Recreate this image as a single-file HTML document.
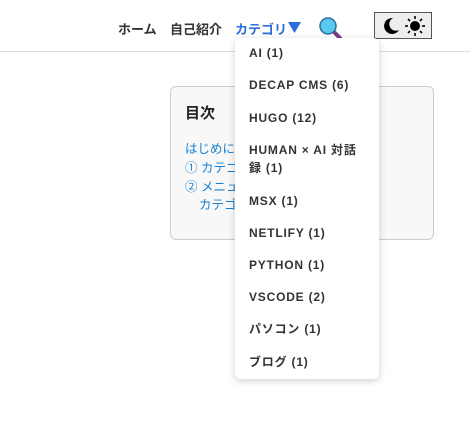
<!DOCTYPE html>
<html><head><meta charset="utf-8"><style>
body{margin:0;width:470px;height:424px;background:#fff;font-family:"Liberation Sans","Noto Sans CJK JP",sans-serif;position:relative;overflow:hidden}
.hdr{position:absolute;left:0;top:0;width:470px;height:51px;border-bottom:1px solid #ddd}
.nav{position:absolute;top:19px;font-size:13px;font-weight:bold;color:#333}
.toc{position:absolute;left:170px;top:86px;width:262px;height:152px;background:#f8f8f8;border:1px solid #ccc;border-radius:6px}
.toc h{position:absolute;left:14px;top:15px;font-size:15px;font-weight:bold;color:#222}
.toc a{position:absolute;font-size:12.5px;color:#1a80d0;white-space:nowrap}
.dd{position:absolute;left:235px;top:38px;width:144px;height:341px;background:#fff;border-radius:6px;box-shadow:0 2px 8px rgba(0,0,0,.18)}
.dd div{position:absolute;left:14px;font-size:12px;font-weight:bold;color:#333;letter-spacing:.8px;line-height:18px}
.tg{position:absolute;left:374px;top:12px;width:58px;height:27px;background:#eee;border:1px solid #555;box-sizing:border-box}
</style></head><body>
<div class="hdr"></div>
<div class="nav" style="left:118px">ホーム</div>
<div class="nav" style="left:170px">自己紹介</div>
<div class="nav" style="left:235px;color:#2a6fd8">カテゴリ</div>
<svg style="position:absolute;left:288px;top:22px" width="13" height="11"><path d="M0 0H13L6.5 11Z" fill="#2a6fd8"/></svg>
<svg style="position:absolute;left:318px;top:16px" width="26" height="24"><line x1="15" y1="15" x2="22" y2="22" stroke="#7a3a8c" stroke-width="4" stroke-linecap="round"/><circle cx="10" cy="10" r="8" fill="#5bc8ef" stroke="#2a6f9a" stroke-width="1.5"/></svg>
<div class="tg">
<svg style="position:absolute;left:7px;top:4px" width="18" height="18"><path d="M11 1A8 8 0 1 0 17 13A6.5 6.5 0 0 1 11 1Z" fill="#000"/></svg>
<svg style="position:absolute;left:30px;top:3px" width="20" height="20"><circle cx="10" cy="10" r="5" fill="#000"/><g stroke="#000" stroke-width="1.6"><line x1="10" y1="0" x2="10" y2="3"/><line x1="10" y1="17" x2="10" y2="20"/><line x1="0" y1="10" x2="3" y2="10"/><line x1="17" y1="10" x2="20" y2="10"/><line x1="3" y1="3" x2="5" y2="5"/><line x1="15" y1="15" x2="17" y2="17"/><line x1="3" y1="17" x2="5" y2="15"/><line x1="15" y1="5" x2="17" y2="3"/></g></svg>
</div>
<div class="toc"><h>目次</h>
<a style="left:14px;top:51px">はじめに</a>
<a style="left:14px;top:70px">① カテゴリ</a>
<a style="left:14px;top:89px">② メニュー</a>
<a style="left:28px;top:107px">カテゴリ</a>
</div>
<div class="dd">
<div style="top:6px">AI (1)</div>
<div style="top:38px">DECAP CMS (6)</div>
<div style="top:71px">HUGO (12)</div>
<div style="top:103px">HUMAN × AI 対話<br>録 (1)</div>
<div style="top:154px">MSX (1)</div>
<div style="top:186px">NETLIFY (1)</div>
<div style="top:218px">PYTHON (1)</div>
<div style="top:250px">VSCODE (2)</div>
<div style="top:282px">パソコン (1)</div>
<div style="top:315px">ブログ (1)</div>
</div>
</body></html>
